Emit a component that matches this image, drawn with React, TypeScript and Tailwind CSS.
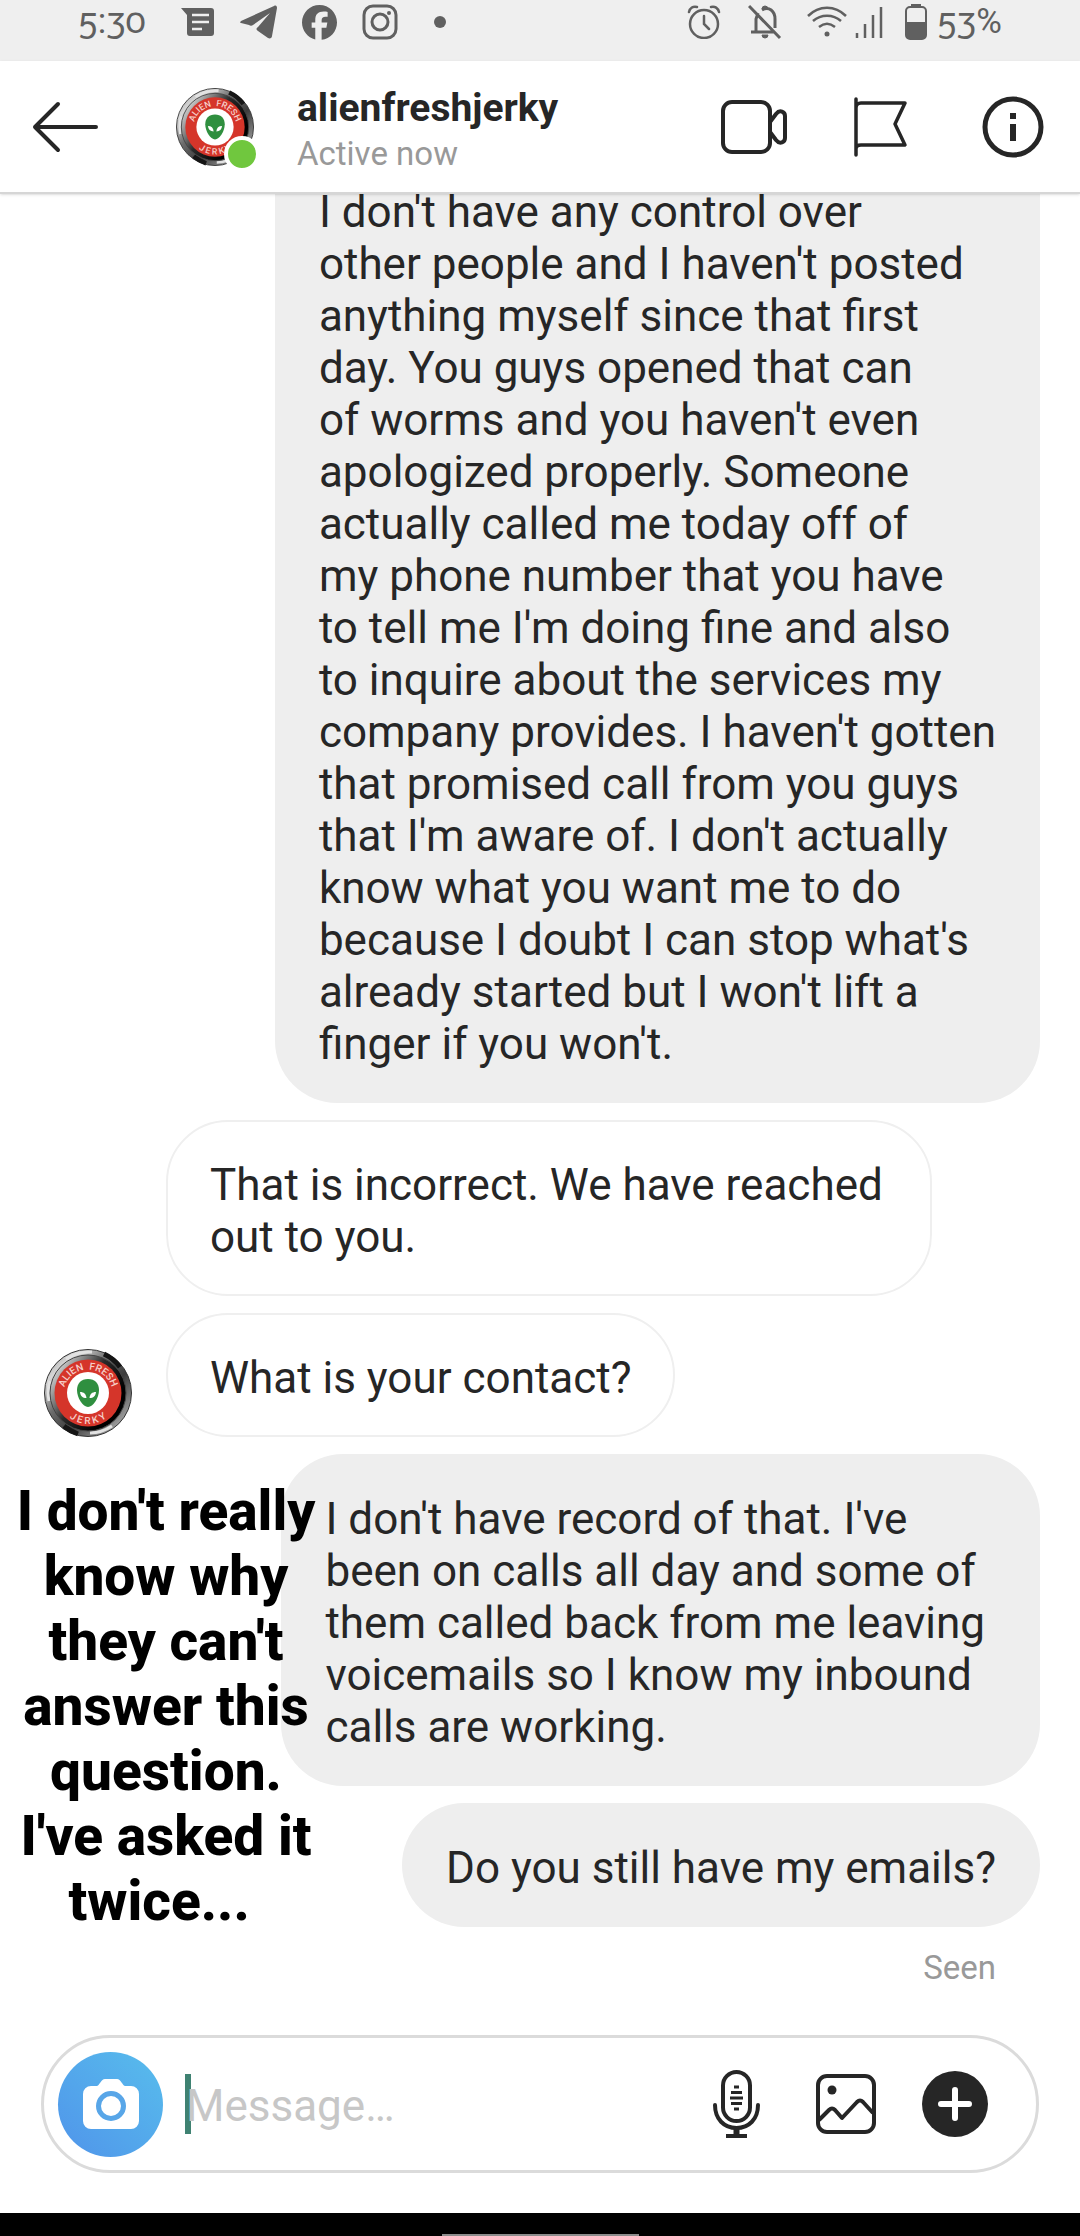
import { useId } from "react";
import { FaFacebook } from "react-icons/fa6";

type Message = {
  id: number;
  from: "me" | "them";
  text: string;
  clipped?: boolean;
  avatar?: boolean;
  note?: string;
};

const messages: Message[] = [
  {
    id: 1,
    from: "me",
    clipped: true,
    text: "I don't have any control over\nother people and I haven't posted\nanything myself since that first\nday. You guys opened that can\nof worms and you haven't even\napologized properly. Someone\nactually called me today off of\nmy phone number that you have\nto tell me I'm doing fine and also\nto inquire about the services my\ncompany provides. I haven't gotten\nthat promised call from you guys\nthat I'm aware of. I don't actually\nknow what you want me to do\nbecause I doubt I can stop what's\nalready started but I won't lift a\nfinger if you won't.",
  },
  { id: 2, from: "them", text: "That is incorrect. We have reached out to you." },
  { id: 3, from: "them", text: "What is your contact?", avatar: true },
  {
    id: 4,
    from: "me",
    text: "I don't have record of that. I've\nbeen on calls all day and some of\nthem called back from me leaving \nvoicemails so I know my inbound\ncalls are working.",
    note: "I don't really\nknow why\nthey can't\nanswer this\nquestion.\nI've asked it\ntwice... ",
  },
  { id: 5, from: "me", text: "Do you still have my emails?" },
];

function Avatar({ className }: { className: string }) {
  const id = useId();
  return (
    <svg viewBox="0 0 88 88" className={className} role="img" aria-label="alienfreshjerky">
      <defs>
        <linearGradient id={`${id}rim`} x1="0" y1="0" x2="1" y2="1">
          <stop offset="0" stopColor="#8a8a8a" />
          <stop offset="0.2" stopColor="#d8d8d8" />
          <stop offset="0.4" stopColor="#6c6c6c" />
          <stop offset="0.6" stopColor="#3c3c3c" />
          <stop offset="0.85" stopColor="#9a9a9a" />
          <stop offset="1" stopColor="#4a4a4a" />
        </linearGradient>
        <linearGradient id={`${id}well`} x1="0.1" y1="0.2" x2="0.8" y2="0.7">
          <stop offset="0" stopColor="#c9c9c9" />
          <stop offset="0.5" stopColor="#2a2a2a" />
          <stop offset="1" stopColor="#000" />
        </linearGradient>
        <path id={`${id}top`} d="M20 50a24.500 24.500 0 1 1 48 0" />
        <path id={`${id}bottom`} d="M13 44a31 31 0 0 0 62 0" />
      </defs>
      <circle cx="44" cy="44" r="43.500" fill={`url(#${id}rim)`} stroke="#333" />
      <path d="M60 5a42 42 0 0 1 16 13M20 77a42 42 0 0 0 14 8" stroke="#151515" strokeWidth="5" fill="none" />
      <path d="M22 10a41 41 0 0 1 26-7M46 84a41 41 0 0 0 22-7M5 52a41 41 0 0 1 1-20" stroke="#e2e2e2" strokeWidth="3" fill="none" />
      <circle cx="44" cy="44" r="38" fill={`url(#${id}well)`} stroke="#444" />
      <circle cx="44" cy="44" r="33.500" fill="#d5352a" />
      <circle cx="44" cy="44" r="21" fill="#fff" />
      <g fill="#f6cfc9" fontFamily="Roboto, sans-serif" fontSize="10" fontWeight="500" textAnchor="middle">
        <text>
          <textPath href={`#${id}top`} startOffset="50%">
            {"ALIEN\u2002FRESH"}
          </textPath>
        </text>
        <text>
          <textPath href={`#${id}bottom`} startOffset="50%">
            J E R K Y
          </textPath>
        </text>
      </g>
      <path d="M44 30c7 0 11 4.500 11 11 0 8-6 17-11 17s-11-9-11-17c0-6.500 4-11 11-11z" fill="#2f8f3f" />
      <path d="M36 43c4 0 6 2 6.500 6-4 0-6-2-6.500-6zM52 43c-4 0-6 2-6.500 6 4 0 6-2 6.500-6z" fill="#fff" />
    </svg>
  );
}

function StatusBar() {
  return (
    <div className="flex h-[61px] shrink-0 items-start justify-between bg-[#efefef] px-[78px] pt-1 text-[#606060]">
      <div className="flex h-9 items-center">
        <span className="w-[103px] text-[35px] leading-9 oldstyle-nums">5:30</span>
        <svg viewBox="0 0 33 28" className="h-7 w-[33px]" fill="none">
          <path d="M0 0h30a3 3 0 0 1 3 3v22a3 3 0 0 1-3 3H9a3 3 0 0 1-3-3V7z" fill="currentColor" />
          <path d="M11 7h17M11 14h17M11 21h10" stroke="#efefef" strokeWidth="2.500" />
        </svg>
        <svg viewBox="0 0 37 34" className="ml-[26px] h-[34px] w-[37px]" fill="currentColor">
          <path d="M1 16 34 1c2-1 3 0 3 2l-5 28c0 2-2 3-4 2l-10-7c-2-1-2-3 0-4l12-14-17 12c-1 1-3 1-4 0l-8-2c-1 0-1-1 0-2z" />
        </svg>
        <FaFacebook className="ml-[25px] size-[35px]" />
        <svg viewBox="0 0 36 36" className="ml-[25px] size-9" fill="none" stroke="currentColor" strokeWidth="3">
          <rect x="2" y="2" width="32" height="32" rx="9" />
          <circle cx="18" cy="18" r="8" />
          <circle cx="27" cy="9" r="2" fill="currentColor" stroke="none" />
        </svg>
        <span className="ml-9 size-3 rounded-full bg-[#606060]" />
      </div>
      <div className="flex h-9 items-center">
        <svg viewBox="0 0 34 34" className="size-[34px]" fill="none" stroke="currentColor" strokeWidth="2.500" strokeLinecap="round">
          <circle cx="17" cy="19" r="14" />
          <path d="M17 11v8l5 5M2 7c1-4 4-6 8-5M32 7c-1-4-4-6-8-5" />
        </svg>
        <svg viewBox="0 0 34 36" className="ml-[27px] h-9 w-[34px]" fill="none" stroke="currentColor" strokeWidth="3">
          <path d="M1 2 32 34M3 28h23M8 28V15l2-6M14 6c7-4 13 1 13 9v9" />
          <path d="M14 5a3 3 0 0 1 6 0M14 31h6a3 3 0 0 1-6 0z" fill="currentColor" strokeWidth="1" />
        </svg>
        <svg viewBox="0 0 40 32" className="ml-[25px] h-8 w-10" fill="none" stroke="currentColor" strokeWidth="2.500">
          <path d="M1 10c11-11 27-11 38 0M6 15c8-7 20-7 28 0M12 21c5-4 11-4 16 0" />
          <circle cx="20" cy="28" r="2.500" fill="currentColor" stroke="none" />
        </svg>
        <svg viewBox="0 0 28 32" className="ml-2 h-8 w-7" stroke="currentColor" strokeWidth="2.500">
          <path d="M2 27v5M10 18v14M18 9v23M26 1v31" />
        </svg>
        <svg viewBox="0 0 22 36" className="ml-[22px] h-9 w-[22px]" fill="none">
          <rect x="1" y="3" width="20" height="32" rx="4" stroke="currentColor" strokeWidth="2" />
          <path d="M6 0h10v3H6zM1 18h20v13a4 4 0 0 1-4 4H5a4 4 0 0 1-4-4z" fill="currentColor" />
        </svg>
        <span className="ml-2.5 text-[35px] leading-9 oldstyle-nums">53%</span>
      </div>
    </div>
  );
}

function Header() {
  return (
    <header className="z-10 flex h-[133px] shrink-0 items-center border-b-2 border-[#d6d6d6] bg-white pr-9 pl-8 text-[#262626] shadow-sm">
      <button type="button" aria-label="Back">
        <svg viewBox="0 0 68 52" className="h-[52px] w-[68px]" fill="none" stroke="currentColor" strokeWidth="4" strokeLinecap="round" strokeLinejoin="round">
          <path d="M64 26H3M26 3 3 26l23 23" />
        </svg>
      </button>
      <div className="relative ml-[76px]">
        <Avatar className="size-[78px]" />
        <span className="absolute -right-1.5 -bottom-1.5 size-9 rounded-full border-4 border-white bg-[#70c73e]" />
      </div>
      <div className="ml-[43px] pt-2">
        <h1 className="text-[39px] leading-[46px] font-bold">alienfreshjerky</h1>
        <p className="text-[33px] leading-[46px] text-[#999]">Active now</p>
      </div>
      <div className="ml-auto flex items-center">
        <button type="button" aria-label="Video call">
          <svg viewBox="0 0 68 54" className="h-[54px] w-[68px]" fill="none" stroke="currentColor" strokeWidth="4" strokeLinejoin="round">
            <rect x="3" y="2" width="47" height="50" rx="9" />
            <path d="m50 22 6-8c4-5 9-2 9 2v22c0 4-5 7-9 2l-6-8" />
          </svg>
        </button>
        <button type="button" aria-label="Flag conversation" className="ml-[66px]">
          <svg viewBox="0 0 54 60" className="h-[60px] w-[54px]" fill="none" stroke="currentColor" strokeWidth="3.500" strokeLinecap="round" strokeLinejoin="round">
            <path d="M2 2v56M2 11c0-3 2-5 5-5h44L41 27l10 21H7c-3 0-5 1-5 4" />
          </svg>
        </button>
        <button type="button" aria-label="Details" className="ml-[74px]">
          <svg viewBox="0 0 62 62" className="size-[62px]" fill="none" stroke="currentColor" strokeWidth="5">
            <circle cx="31" cy="31" r="28" />
            <path d="M31 17v6M31 28v17" strokeWidth="6" />
          </svg>
        </button>
      </div>
    </header>
  );
}

function Bubble({ message }: { message: Message }) {
  if (message.from === "them") {
    return (
      <li className="flex items-end gap-[34px]">
        <div className="w-[88px] shrink-0">{message.avatar && <Avatar className="size-[88px]" />}</div>
        <p className="max-w-[766px] rounded-[62px] border-2 border-[#efefef] px-[42px] pt-[37px] pb-[31px]">{message.text}</p>
      </li>
    );
  }
  return (
    <li className="relative flex justify-end">
      <p className={`rounded-[62px] bg-[#eee] px-11 pt-[39px] pb-[33px] whitespace-break-spaces ${message.clipped ? "rounded-t-none" : ""}`}>
        {message.text}
      </p>
      {message.note && (
        <p className="absolute top-[25px] -left-[34px] w-[312px] text-center text-[55px] leading-[65px] font-extrabold whitespace-break-spaces text-black">
          {message.note}
        </p>
      )}
    </li>
  );
}

function Composer() {
  return (
    <form className="mx-[41px] mb-10 flex h-[138px] shrink-0 items-center rounded-full border-[3px] border-[#dbdbdb] pr-12 pl-3.5 text-[#262626]">
      <button
        type="button"
        aria-label="Camera"
        className="flex size-[105px] shrink-0 items-center justify-center rounded-full bg-linear-to-tr from-[#5094ea] to-[#58bdec]"
      >
        <svg viewBox="0 0 56 50" className="h-[50px] w-14">
          <path d="M8 7h6c3-1 4-7 8-7h12c4 0 5 6 8 7h6a8 8 0 0 1 8 8v27a8 8 0 0 1-8 8H8a8 8 0 0 1-8-8V15a8 8 0 0 1 8-8z" fill="#fff" />
          <circle cx="28" cy="27" r="12.500" fill="none" stroke="#58a6e8" strokeWidth="5" />
        </svg>
      </button>
      <div className="relative ml-[22px] flex flex-1 items-center">
        <span className="absolute left-0 h-[60px] w-1.5 bg-[#3f8272]" />
        <input
          type="text"
          aria-label="Message"
          placeholder="Message…"
          className="relative h-[60px] w-full bg-transparent pt-1 pl-px text-[44px] outline-none placeholder:text-[#c7c7c7]"
        />
      </div>
      <button type="button" aria-label="Voice message">
        <svg viewBox="0 0 48 68" className="h-[68px] w-12" fill="none" stroke="currentColor" strokeWidth="4">
          <rect x="11" y="2" width="27" height="49" rx="13.500" />
          <path d="M3 35c0 14 9 23 21.500 23S46 49 46 35" strokeLinecap="round" />
          <path d="M24.500 58v7" strokeWidth="6" />
          <path d="M14 66h21" />
          <path d="M22 17h5M19 22.500h11M18 28h13M19 33.500h11M22 39h5" strokeWidth="3" />
        </svg>
      </button>
      <button type="button" aria-label="Gallery" className="ml-14">
        <svg viewBox="0 0 60 60" className="size-[60px]" fill="none" stroke="currentColor" strokeWidth="4" strokeLinejoin="round">
          <rect x="2" y="2" width="56" height="56" rx="9" />
          <circle cx="16" cy="16" r="4.500" fill="currentColor" stroke="none" />
          <path d="m3 46 10-10c2-2 4-2 6 0l7 8 15-16c2-2 4-2 6 0l10 11" />
        </svg>
      </button>
      <button type="button" aria-label="More" className="ml-[46px]">
        <svg viewBox="0 0 66 66" className="size-[66px]">
          <circle cx="33" cy="33" r="33" fill="currentColor" />
          <path d="M33 19v28M19 33h28" stroke="#fff" strokeWidth="6" strokeLinecap="round" />
        </svg>
      </button>
    </form>
  );
}

export default function App() {
  return (
    <div className="flex h-screen flex-col overflow-hidden bg-white font-[Roboto,sans-serif]">
      <StatusBar />
      <Header />
      <main className="flex min-h-0 flex-1 flex-col justify-end overflow-hidden pr-10 pb-12 pl-11">
        <ul className="flex flex-col gap-[17px] text-[44px] leading-[52px] text-[#262626]">
          {messages.map((message) => (
            <Bubble key={message.id} message={message} />
          ))}
        </ul>
        <p className="mt-[22px] pr-11 text-right text-[33px] leading-[38px] text-[#999]">Seen</p>
      </main>
      <Composer />
      <div className="flex h-[23px] shrink-0 items-end justify-center bg-black">
        <span className="h-0.5 w-[197px] bg-[#8c8c8c]" />
      </div>
    </div>
  );
}
